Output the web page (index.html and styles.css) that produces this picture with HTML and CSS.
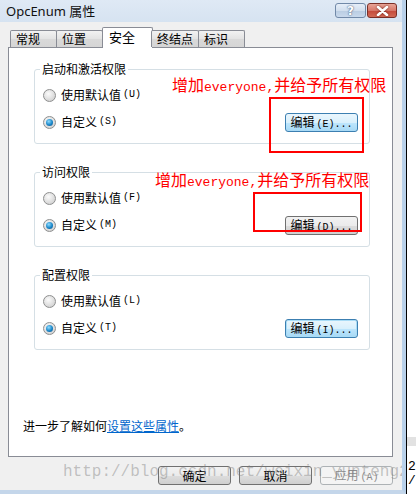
FILE: index.html
```html
<!DOCTYPE html>
<html lang="zh-CN">
<head>
    <meta charset="UTF-8">
    <title>OpcEnum 属性</title>
    <link rel="stylesheet" href="styles.css">
</head>
<body>
    <div class="screen">
        <div class="window">
            <div class="titlebar">
                <span class="title">OpcEnum 属性</span>
                <div class="caption-btns">
                    <span class="cap cap-help">?</span>
                    <span class="cap cap-close">
                        <svg width="13" height="10" viewBox="0 0 13 10"><path d="M2 1 L11 9 M11 1 L2 9" stroke="#fff" stroke-width="2.6" stroke-linecap="round"/></svg>
                    </span>
                </div>
            </div>

            <div class="dialog">
                <div class="tabs">
                    <span class="tab">常规</span>
                    <span class="tab">位置</span>
                    <span class="tab active">安全</span>
                    <span class="tab">终结点</span>
                    <span class="tab">标识</span>
                </div>

                <div class="panel">
                    <fieldset class="group">
                        <legend>启动和激活权限</legend>
                        <div class="row">
                            <label class="radio"><span class="dot"></span>使用默认值<span class="key">(U)</span></label>
                        </div>
                        <div class="row">
                            <label class="radio"><span class="dot checked"></span>自定义<span class="key">(S)</span></label>
                            <button class="btn hot">编辑<span class="key">(E)...</span></button>
                        </div>
                    </fieldset>

                    <fieldset class="group">
                        <legend>访问权限</legend>
                        <div class="row">
                            <label class="radio"><span class="dot"></span>使用默认值<span class="key">(F)</span></label>
                        </div>
                        <div class="row">
                            <label class="radio"><span class="dot checked"></span>自定义<span class="key">(M)</span></label>
                            <button class="btn">编辑<span class="key">(D)...</span></button>
                        </div>
                    </fieldset>

                    <fieldset class="group">
                        <legend>配置权限</legend>
                        <div class="row">
                            <label class="radio"><span class="dot"></span>使用默认值<span class="key">(L)</span></label>
                        </div>
                        <div class="row">
                            <label class="radio"><span class="dot checked"></span>自定义<span class="key">(T)</span></label>
                            <button class="btn hot focus">编辑<span class="key">(I)...</span></button>
                        </div>
                    </fieldset>

                    <p class="help">进一步了解如何<a href="#">设置这些属性</a>。</p>
                </div>

                <div class="actions">
                    <button class="btn">确定</button>
                    <button class="btn">取消</button>
                    <button class="btn disabled">应用<span class="key">(A)</span></button>
                </div>
            </div>

            <!-- annotations drawn over the screenshot -->
            <div class="note note-1">增加<span class="latin">everyone,</span>并给予所有权限</div>
            <div class="note note-2">增加<span class="latin">everyone,</span>并给予所有权限</div>
            <div class="mark mark-1"></div>
            <div class="mark mark-2"></div>
            <div class="watermark">http://blog.csdn.net/weixin_yunteng2</div>
        </div>
        <div class="outside">
            <div class="band"></div>
            <div class="peek">2<br>/</div>
        </div>
    </div>
</body>
</html>
```

FILE: styles.css
```css
body {
    margin: 0;
    background-color: #fff;
    font-family: "Noto Sans", "Noto Sans CJK SC", sans-serif;
    font-size: 12px;
    color: #000;
}
.screen {
    display: flex;
    width: 416px;
    height: 494px;
    overflow: hidden;
}
.window {
    position: relative;
    width: 406px;
    height: 494px;
    box-sizing: border-box;
    background-color: #f0f0f0;
    border-right: 4px solid #b9d1ea;
    border-bottom: 4px solid #c4d6ea;
    display: flex;
    flex-direction: column;
    overflow: hidden;
}
.titlebar {
    height: 22px;
    flex-shrink: 0;
    background: linear-gradient(#dfe9f5, #d6e3f1);
    display: flex;
    align-items: center;
    padding-left: 6px;
}
.title {
    font-size: 13px;
    line-height: 16px;
    color: #111;
}
.caption-btns {
    margin-left: auto;
    margin-right: 5px;
    display: flex;
    align-self: flex-start;
    margin-top: 3px;
}
.cap {
    height: 15px;
    box-sizing: border-box;
    display: flex;
    align-items: center;
    justify-content: center;
    border-radius: 3px;
}
.cap-help {
    width: 31px;
    border: 1px solid #7189a8;
    background: linear-gradient(#e6eef8 0%, #d2dfee 50%, #b9cce2 51%, #c9d9ec 100%);
    color: #fff;
    font-family: "DejaVu Sans", sans-serif;
    font-weight: bold;
    font-size: 12px;
    text-shadow: 0 0 2px #4c6384, 0 0 1px #4c6384;
    margin-right: 1px;
}
.cap-close {
    width: 30px;
    border: 1px solid #7a2f27;
    background: linear-gradient(#e8a497 0%, #d7786a 50%, #c4493a 51%, #d26a55 100%);
}
.cap-close svg {
    filter: drop-shadow(0 0 1px #6b1f17);
}

.dialog {
    flex: 1;
    display: flex;
    flex-direction: column;
    padding: 5px 9px 0 8px;
}
.tabs {
    display: flex;
    align-items: flex-end;
    height: 20px;
    padding-left: 2px;
    position: relative;
    z-index: 1;
}
.tab {
    height: 17px;
    box-sizing: border-box;
    min-width: 47px;
    padding: 0 5px;
    border: 1px solid #898c95;
    border-bottom: none;
    border-radius: 2px 2px 0 0;
    background: linear-gradient(#f2f2f2, #e3e3e3 50%, #d9d9d9 51%, #d5d5d5);
    font-family: "Noto Sans CJK SC", sans-serif;
    font-size: 12px;
    line-height: 16px;
}
.tab + .tab {
    margin-left: -1px;
}
.tab.active {
    height: 21px;
    margin: 0 -2px -1px -1px;
    min-width: 51px;
    padding-left: 6px;
    background: #fff;
    font-size: 13px;
    line-height: 18px;
}
.tab.active + .tab {
    margin-left: 0;
}

.panel {
    height: 410px;
    box-sizing: border-box;
    background-color: #fff;
    border: 1px solid #898c95;
    display: flex;
    flex-direction: column;
    padding: 13px 0 22px 14px;
    font-family: "Noto Sans CJK SC", sans-serif;
}
.group {
    width: 336px;
    box-sizing: border-box;
    margin: 0 0 20px 11px;
    padding: 8px 11px 11px 8px;
    border: 1px solid #d5dfe5;
    border-radius: 3px;
}
.group legend {
    padding: 0 2px;
    margin-left: -3px;
    line-height: 16px;
    font-size: 12px;
}
.row {
    display: flex;
    align-items: center;
    height: 20px;
}
.row + .row {
    margin-top: 7px;
}
.radio {
    display: flex;
    align-items: center;
    line-height: 16px;
}
.key {
    font-family: "Liberation Mono", monospace;
    font-size: 10px;
    margin-left: 2px;
}
.dot {
    position: relative;
    width: 13px;
    height: 13px;
    box-sizing: border-box;
    border-radius: 50%;
    border: 1px solid #8e8f8f;
    background: radial-gradient(circle at 40% 35%, #fbfbfb, #dcdcdc 60%, #c8c8c8);
    margin-right: 5px;
}
.dot.checked::after {
    content: "";
    position: absolute;
    left: 2px;
    top: 2px;
    width: 7px;
    height: 7px;
    border-radius: 50%;
    background: radial-gradient(circle at 40% 35%, #8fdcff, #1a86c8 55%, #0a4d82);
}

.btn {
    width: 73px;
    height: 19px;
    box-sizing: border-box;
    border: 1px solid #707070;
    border-radius: 3px;
    background: linear-gradient(#f2f2f2 0%, #ebebeb 50%, #dddddd 51%, #cfcfcf 100%);
    font-family: "Noto Sans CJK SC", sans-serif;
    font-size: 12px;
    line-height: 15px;
    padding: 0;
    color: #000;
}
.row .btn {
    margin-left: auto;
}
.btn.hot {
    border-color: #3c7fb1;
    background: linear-gradient(#eaf6fd 0%, #d9f0fc 50%, #bee6fd 51%, #a7d9f5 100%);
}
.btn.focus {
    box-shadow: inset 0 0 0 1px #a9dcf6;
}
.btn.disabled {
    border-color: #adb2b5;
    background: #f4f4f4;
    color: #8d8d8d;
}

.help {
    margin: auto 0 0 0;
    line-height: 16px;
}
.help a {
    color: #0066cc;
    text-decoration: underline;
}
.actions {
    display: flex;
    justify-content: flex-end;
    gap: 8px;
    margin-top: 9px;
}

.note {
    position: absolute;
    color: #ff0000;
    font-family: "Noto Sans CJK SC", sans-serif;
    font-size: 16px;
    line-height: 18px;
    white-space: nowrap;
}
.note .latin {
    font-family: "Liberation Mono", monospace;
    font-size: 13px;
}
.note-1 {
    left: 172px;
    top: 75px;
}
.note-2 {
    left: 155px;
    top: 170px;
}
.mark {
    position: absolute;
    box-sizing: border-box;
    border: 2px solid #ff0000;
}
.mark-1 {
    left: 269px;
    top: 97px;
    width: 95px;
    height: 56px;
}
.mark-2 {
    left: 253px;
    top: 192px;
    width: 109px;
    height: 40px;
}
.watermark {
    position: absolute;
    left: 63px;
    top: 461px;
    font-family: "Liberation Mono", monospace;
    font-size: 16px;
    line-height: 22px;
    color: rgba(120, 120, 120, 0.42);
    white-space: nowrap;
}

.outside {
    flex: 1;
    border-left: 1px solid #000;
    background-color: #fff;
    display: flex;
    flex-direction: column;
    padding-top: 437px;
}
.band {
    height: 9px;
    background-color: #e2e2e2;
}
.peek {
    margin-top: 14px;
    font-family: "Liberation Mono", monospace;
    font-size: 13px;
    line-height: 14px;
    padding-left: 1px;
}
```
